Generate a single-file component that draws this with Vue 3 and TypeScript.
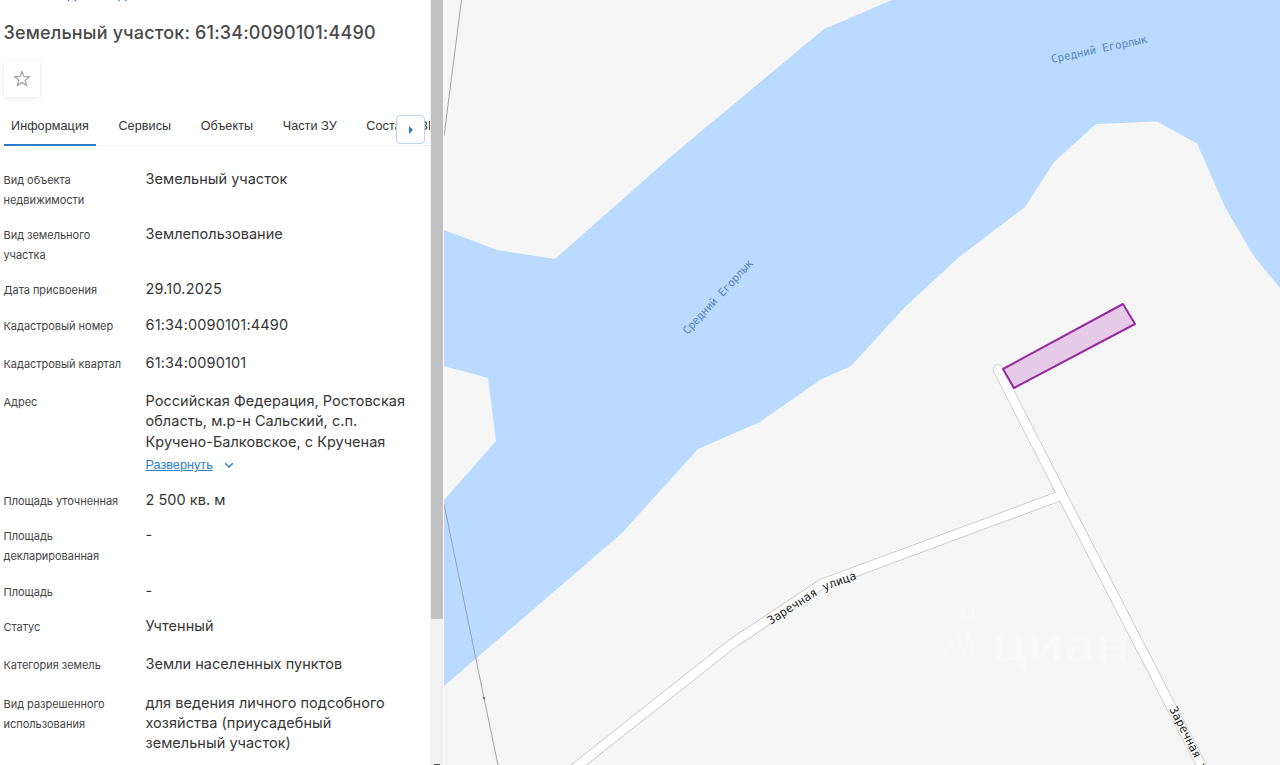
<script setup lang="ts">
interface Field { label: string[]; value: string[]; height: number; more?: boolean; numeric?: boolean }

const tabs: string[] = ['Информация', 'Сервисы', 'Объекты', 'Части ЗУ', 'Состав ЕЗП']

const fields: Field[] = [
  { label: ['Вид объекта', 'недвижимости'], value: ['Земельный участок'], height: 54.5 },
  { label: ['Вид земельного', 'участка'], value: ['Землепользование'], height: 55.5 },
  { label: ['Дата присвоения'], value: ['29.10.2025'], height: 36, numeric: true },
  { label: ['Кадастровый номер'], value: ['61:34:0090101:4490'], height: 38, numeric: true },
  { label: ['Кадастровый квартал'], value: ['61:34:0090101'], height: 38, numeric: true },
  {
    label: ['Адрес'],
    value: ['Российская Федерация, Ростовская', 'область, м.р-н Сальский, с.п.', 'Кручено-Балковское, с Крученая'],
    height: 98.5,
    more: true,
  },
  { label: ['Площадь уточненная'], value: ['2 500 кв. м'], height: 35.5 },
  { label: ['Площадь', 'декларированная'], value: ['-'], height: 56 },
  { label: ['Площадь'], value: ['-'], height: 34.5 },
  { label: ['Статус'], value: ['Учтенный'], height: 38.5 },
  { label: ['Категория земель'], value: ['Земли населенных пунктов'], height: 38.5 },
  {
    label: ['Вид разрешенного', 'использования'],
    value: ['для ведения личного подсобного', 'хозяйства (приусадебный', 'земельный участок)'],
    height: 70,
  },
]
</script>

<template>
  <div class="screen">
    <aside class="panel">
      <a class="back">Назад к выдаче объектов</a>
      <h1>Земельный участок: 61:34:0090101:4490</h1>
      <button class="star" aria-label="Избранное">
        <svg width="18" height="18" viewBox="0 0 18 18">
          <path d="M9 1.2 10.9 6.6 16.6 6.7 12.1 10.2 13.7 15.600 9 12.400 4.3 15.600 5.900 10.2 1.4 6.7 7.1 6.6Z" />
        </svg>
      </button>
      <nav class="tabs">
        <span v-for="(tab, i) in tabs" :key="tab" class="tab" :class="{ active: i === 0 }">{{ tab }}</span>
        <button class="next" aria-label="Далее">
          <svg width="6" height="8" viewBox="0 0 6 8"><path d="M1 0 5 4 1 8Z" /></svg>
        </button>
      </nav>
      <dl class="fields">
        <div v-for="(f, i) in fields" :key="i" class="field" :style="{ height: f.height + 'px' }">
          <dt><div v-for="line in f.label" :key="line">{{ line }}</div></dt>
          <dd :class="{ numeric: f.numeric }">
            <div v-for="line in f.value" :key="line">{{ line }}</div>
            <a v-if="f.more" class="more"><span>Развернуть</span>
              <svg width="10" height="7" viewBox="0 0 10 7"><path d="M1.2 1.2 5 5 8.8 1.2" /></svg>
            </a>
          </dd>
        </div>
      </dl>
    </aside>
    <div class="scrollbar"><div class="thumb"></div><i class="arrow"></i></div>
    <svg class="map" width="836" height="765" viewBox="444 0 836 765">
      <path class="water" d="M892 0 824 29 675 153 555 259 497 250 444 230V366L488 378 496 441 444 500V686L621 534 698 449 760 422 820 380 851 366 905 307 958 258 1025 207 1054 162 1096 124 1157 121.500 1197 143.500 1225 207 1253 255 1280 288V0Z" />
      <g class="boundary">
        <path d="M461.500 0 444 136M444 504 484 698 498 765" />
        <circle cx="484" cy="698" r="1.300" />
      </g>
      <g class="road-edge">
        <path d="M998 369.500 1061.500 494 1209 780" />
        <path d="M1061 495.500 822 584 733 643 566 775" />
      </g>
      <g class="road">
        <path d="M998 369.500 1061.500 494 1209 780" />
        <path d="M1061 495.500 822 584 733 643 566 775" />
      </g>
      <path class="parcel" d="M1003 369 1123 304 1135 324 1014 388Z" />
      <defs>
        <path id="river-a" d="M1052 63 1169 38" />
        <path id="river-b" d="M687.500 335 767.500 249" />
        <path id="street-a" d="M770.500 625 808 601Q824 590 840 585L880 571" />
        <path id="street-b" d="M1169 709 1239 845" />
      </defs>
      <text class="river"><textPath href="#river-a" textLength="98">Средний Егорлык</textPath></text>
      <text class="river"><textPath href="#river-b" textLength="97">Средний Егорлык</textPath></text>
      <text class="street"><textPath href="#street-a">Заречная улица</textPath></text>
      <text class="street"><textPath href="#street-b">Заречная улица</textPath></text>
      <g class="watermark">
        <circle cx="968" cy="613" r="6" />
        <path d="M940 658 958 634 964 655 968 634 974 655" />
        <text x="992" y="661" textLength="138" lengthAdjust="spacingAndGlyphs">циан</text>
      </g>
    </svg>
  </div>
</template>

<style>
html, body { margin: 0; overflow: hidden; background: #fff; }
</style>

<style scoped>
.screen { width: 1280px; height: 765px; display: flex; overflow: hidden; background: #fff; font-family: Inter, "Open Sans", sans-serif; color: #333; }
.panel { width: 430px; height: 765px; flex: none; overflow: hidden; box-sizing: border-box; padding-left: 3.500px; display: flex; flex-direction: column; }
.back { height: 3px; flex: none; display: flex; align-items: flex-end; padding-left: 31px; line-height: 18px; font-size: 14px; word-spacing: 4px; color: #2c7ed0; }
h1 { margin: 18px 0 0; flex: none; height: 24px; line-height: 24px; font-size: 18px; font-weight: 500; white-space: nowrap; color: #4a4a4a; letter-spacing: .17px; }
.star { margin: 16px 0 0; padding: 0; border: 0; width: 36.500px; height: 36px; flex: none; display: grid; place-items: center; background: #fff; border-radius: 3px; box-shadow: 0 1px 4px rgba(0, 0, 0, .1); }
.star path { fill: none; stroke: #a9a9a9; stroke-width: 1.3; stroke-linejoin: round; }
.tabs { position: relative; flex: none; margin-top: 10px; height: 39px; display: flex; white-space: nowrap; font-family: "Liberation Sans", Arial, sans-serif; font-size: 12.600px; letter-spacing: .08px; overflow: hidden; box-shadow: inset 0 -1px #eee; }
.tab { flex: none; box-sizing: border-box; height: 39px; line-height: 39px; padding: 0 7.500px; margin-right: 14.500px; color: #333; }
.tab.active { border-bottom: 2px solid #2a7cc9; }
.next { position: absolute; right: 5px; top: 8px; width: 29px; height: 29px; box-sizing: border-box; padding: 0; border: 1px solid #b9d5f0; border-radius: 4px; background: #fff; display: grid; place-items: center; }
.next path { fill: #1f7ad0; }
.fields { margin: 23px 0 0; }
.field { display: flex; }
dt { width: 142px; flex: none; padding-top: 1px; font-size: 11px; letter-spacing: -.03px; line-height: 20.3px; white-space: nowrap; color: #444; }
dd { margin: 0; font-size: 14.5px; letter-spacing: .03px; line-height: 20.3px; white-space: nowrap; color: #363636; }
dd.numeric { letter-spacing: .15px; }
.more { display: flex; align-items: center; gap: 11px; height: 27px; letter-spacing: 0; font-family: "Liberation Sans", Arial, sans-serif; font-size: 12.700px; color: #2c82cb; }
.more span { text-decoration: underline; }
.more path { fill: none; stroke: #2c82cb; stroke-width: 1.5; }
.scrollbar { position: relative; width: 14px; flex: none; background: #f1f1f1; box-sizing: border-box; border-right: 1px solid #fafafa; }
.thumb { width: 12px; height: 619px; margin-left: 1px; background: #c1c1c1; }
.arrow { position: absolute; left: 4px; bottom: 0; width: 6px; height: 1px; background: #555; }
.map { flex: none; display: block; background: #f6f6f6; }
.water { fill: #bbdaff; }
.boundary path { fill: none; stroke: #8f8f9a; stroke-width: .8; }
.boundary circle { fill: #777; }
.road-edge path { fill: none; stroke: #c9c9c9; stroke-width: 10.500; stroke-linecap: round; stroke-linejoin: round; }
.road path { fill: none; stroke: #fff; stroke-width: 8.800; stroke-linecap: round; stroke-linejoin: round; }
.parcel { fill: #e6cbe8; stroke: #982aa0; stroke-width: 2; stroke-linejoin: round; }
.river { font: 11px "DejaVu Sans Mono", monospace; fill: #5587ba; }
.street { font: 11.700px "DejaVu Sans Mono", monospace; fill: #1c1c1c; paint-order: stroke; stroke: #fff; stroke-width: 1.500; }
.watermark { fill: none; stroke: #f9f9f9; stroke-width: 1.200; }
.watermark text { font: 600 46px "Open Sans", sans-serif; fill: #f8f8f8; stroke: none; }
</style>
